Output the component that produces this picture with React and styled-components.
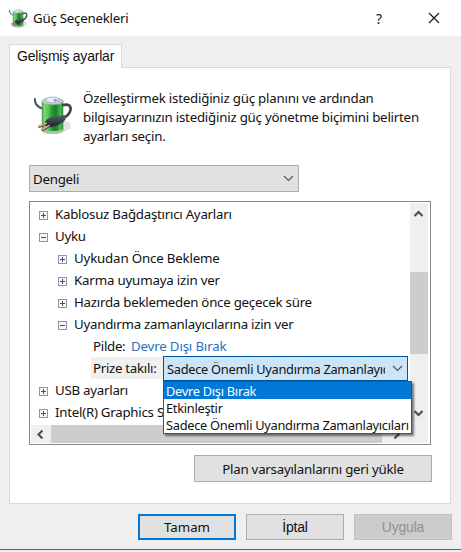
import React, { useState } from "react";
import styled, { createGlobalStyle } from "styled-components";

const treeItems = [
  { label: "Kablosuz Bağdaştırıcı Ayarları", level: 0 },
  { label: "Uyku", level: 0, open: true },
  { label: "Uykudan Önce Bekleme", level: 1, spacing: -0.18 },
  { label: "Karma uyumaya izin ver", level: 1, spacing: -0.18 },
  { label: "Hazırda beklemeden önce geçecek süre", level: 1 },
  { label: "Uyandırma zamanlayıcılarına izin ver", level: 1, open: true },
];

const moreItems = [
  { label: "USB ayarları", level: 0 },
  { label: "Intel(R) Graphics Settings", level: 0 },
];

const timerOptions = [
  "Devre Dışı Bırak",
  "Etkinleştir",
  "Sadece Önemli Uyandırma Zamanlayıcıları",
];

function PowerIcon({ size }) {
  return (
    <svg width={size} height={size} viewBox="0 0 40 40">
      <defs>
        <linearGradient id={`cell${size}`} x1="0" x2="1" y1="0" y2="0">
          <stop offset="0" stopColor="#3b9a43" />
          <stop offset="0.12" stopColor="#7fd57b" />
          <stop offset="0.3" stopColor="#5cc45e" />
          <stop offset="0.45" stopColor="#2c9d36" />
          <stop offset="0.65" stopColor="#168023" />
          <stop offset="0.88" stopColor="#4dba55" />
          <stop offset="1" stopColor="#2a7d35" />
        </linearGradient>
        <linearGradient id={`cord${size}`} x1="0" x2="0" y1="0" y2="1">
          <stop offset="0" stopColor="#59606b" />
          <stop offset="1" stopColor="#1d1f24" />
        </linearGradient>
      </defs>
      <path d="M28 38 L38 33 L37 27 L30 25Z" fill="#d5d5d5" opacity="0.7" />
      <path d="M0.500 2 Q1 11 9 13" fill="none" stroke="#4a5663" strokeWidth="2.200" />
      <path d="M8 5 V35 Q8 38.500 19 38.500 Q30 38.500 30 35 V5Z" fill={`url(#cell${size})`} />
      <path d="M8 34 Q19 38 30 34 V36 Q28 39 19 39 Q10 39 8 36Z" fill="#a8c9a6" />
      <path d="M8 6 Q8 2 19 2 Q30 2 30 6 Q28 9 19 9 Q10 9 8 6Z" fill="#b9d6bd" stroke="#7dab83" strokeWidth="0.6" />
      <ellipse cx="19" cy="4" rx="7" ry="3" fill="#e9e7f8" stroke="#9093ad" strokeWidth="0.6" />
      <path d="M20 3 L25 4 L21 6Z" fill="#8f7fc4" />
      <path d="M29 9.500 Q38 7 37.500 14 Q36.500 20 29 23" fill="none" stroke="#3c4450" strokeWidth="2.800" />
      <path d="M11 27 Q13 22 20 21.500 L31 19.500 Q34.500 21 31 26 Q25 30.500 17 32 Q11 32 11 27Z" fill={`url(#cord${size})`} />
      <path d="M13 28 L4.500 32 M16 30.500 L8 35" stroke="#5a3d24" strokeWidth="2.600" />
      <path d="M13 27.500 L4.500 31.500 M16 30 L8 34.500" stroke="#e0c19b" strokeWidth="1.400" />
    </svg>
  );
}

function Chevron({ direction = "down", bold }) {
  const points = {
    down: "1,3 5.5,7.500 10,3",
    up: "1.500,8 5.500,4 9.500,8",
    left: "7.500,1.500 3.500,5.500 7.500,9.500",
    right: "3.500,1.500 7.500,5.500 3.500,9.500",
    boldDown: "1.500,3 5.500,7 9.500,3",
  };
  const key = bold && direction === "down" ? "boldDown" : direction;
  return (
    <svg width="11" height="11" viewBox="0 0 11 11">
      <polyline
        points={points[key]}
        fill="none"
        stroke={bold ? "#505050" : "#555"}
        strokeWidth={bold ? 2.2 : 1.2}
      />
    </svg>
  );
}

function TreeItem({ item }) {
  return (
    <Row $level={item.level}>
      <Expander>
        <svg width="9" height="9" viewBox="0 0 9 9" shapeRendering="crispEdges">
          <rect x="0.5" y="0.5" width="8" height="8" fill="#f8f8fa" stroke="#9196a0" />
          <path d="M2 4.500 H7" stroke="#3f4d86" />
          {!item.open && <path d="M4.500 2 V7" stroke="#3f4d86" />}
        </svg>
      </Expander>
      <Label $spacing={item.spacing}>{item.label}</Label>
    </Row>
  );
}

export default function App() {
  const [selected, setSelected] = useState(0);

  return (
    <>
      <GlobalStyle />
      <Dialog>
        <TitleBar>
          <PowerIcon size={19} />
          <Title>Güç Seçenekleri</Title>
          <HelpButton>?</HelpButton>
          <CloseButton>
            <svg width="12" height="12" viewBox="0 0 12 12">
              <path d="M1 1 L11 11 M11 1 L1 11" stroke="#111" strokeWidth="1.100" />
            </svg>
          </CloseButton>
        </TitleBar>
        <Content>
          <Tab>Gelişmiş ayarlar</Tab>
          <Panel>
            <Intro>
              <PowerIcon size={39} />
              <IntroText>
                <IntroLine>Özelleştirmek istediğiniz güç planını ve ardından</IntroLine>
                <IntroLine>bilgisayarınızın istediğiniz güç yönetme biçimini belirten</IntroLine>
                <IntroLine>ayarları seçin.</IntroLine>
              </IntroText>
            </Intro>
            <PlanSelect>
              <span>Dengeli</span>
              <Chevron />
            </PlanSelect>
            <TreeBox>
              <Tree>
                {treeItems.map((item) => (
                  <TreeItem key={item.label} item={item} />
                ))}
                <Row $level={2}>
                  <SettingName $width={40}>Pilde:</SettingName>
                  <SettingLink>Devre Dışı Bırak</SettingLink>
                </Row>
                <Row $level={2}>
                  <SettingName $width={72} $active>Prize takılı:</SettingName>
                  <SelectAnchor>
                    <TimerSelect>
                      <TimerValue>{timerOptions[2]}</TimerValue>
                      <Chevron />
                    </TimerSelect>
                    <Menu>
                      {timerOptions.map((option, index) => (
                        <Option
                          key={option}
                          $selected={index === selected}
                          onMouseEnter={() => setSelected(index)}
                        >
                          {option}
                        </Option>
                      ))}
                    </Menu>
                  </SelectAnchor>
                </Row>
                {moreItems.map((item) => (
                  <TreeItem key={item.label} item={item} />
                ))}
              </Tree>
              <VerticalBar>
                <Chevron direction="up" bold />
                <VerticalThumb />
                <Chevron bold />
              </VerticalBar>
              <HorizontalBar>
                <Chevron direction="left" bold />
                <HorizontalThumb />
                <Chevron direction="right" bold />
              </HorizontalBar>
            </TreeBox>
            <RestoreButton>Plan varsayılanlarını geri yükle</RestoreButton>
          </Panel>
          <Footer>
            <FooterButton $primary>Tamam</FooterButton>
            <FooterButton>İptal</FooterButton>
            <FooterButton disabled>Uygula</FooterButton>
          </Footer>
        </Content>
      </Dialog>
    </>
  );
}

const GlobalStyle = createGlobalStyle`
  * {
    box-sizing: border-box;
  }
  body {
    margin: 0;
    overflow: hidden;
    background-color: #f0f0f0;
    color: #111;
    font-family: "Noto Sans", sans-serif;
    font-size: 13.3px;
    letter-spacing: -0.25px;
  }
  svg {
    display: block;
    flex-shrink: 0;
  }
  button {
    padding: 0;
    font: inherit;
    letter-spacing: inherit;
    color: inherit;
  }
`;

const Dialog = styled.div`
  width: 461px;
  height: 550px;
  background-color: #efefef;
  border-bottom: 1px solid #606060;
`;

const TitleBar = styled.header`
  display: flex;
  align-items: center;
  height: 36px;
  padding-left: 9px;
  background-color: #fff;
`;

const Title = styled.h1`
  flex: 1;
  margin: 0 0 0 5px;
  font-size: 13.3px;
  font-weight: 400;
`;

const HelpButton = styled.button`
  width: 12px;
  margin-right: 43px;
  border: 0;
  background: none;
  font-size: 14px;
`;

const CloseButton = styled.button`
  margin-right: 21px;
  border: 0;
  background: none;
`;

const Content = styled.main`
  padding: 8px 9px 0;
`;

const Tab = styled.div`
  position: relative;
  width: 113px;
  height: 24px;
  margin-bottom: -1px;
  padding: 3px 0 0 7px;
  border: 1px solid #d9d9d9;
  border-bottom: 0;
  background-color: #fff;
  font-family: "Liberation Sans", sans-serif;
  font-size: 14px;
  line-height: 17px;
  letter-spacing: -0.2px;
  white-space: nowrap;
`;

const Panel = styled.section`
  display: flex;
  flex-direction: column;
  width: 442px;
  height: 437px;
  padding: 20px 18px 0 19px;
  border: 1px solid #d9d9d9;
  background-color: #fff;
`;

const Intro = styled.div`
  display: flex;
  gap: 10px;
  height: 77px;
  padding: 8px 0 0 5px;
`;

const IntroText = styled.div`
  margin-top: -7px;
`;

const IntroLine = styled.p`
  margin: 0;
  line-height: 19px;
  letter-spacing: -0.23px;
  white-space: nowrap;
`;

const PlanSelect = styled.div`
  display: flex;
  align-items: center;
  justify-content: space-between;
  width: 270px;
  height: 27px;
  padding: 0 4px 0 3px;
  border: 1px solid #acacac;
  background-color: #e1e1e1;
`;

const TreeBox = styled.div`
  display: grid;
  grid-template-columns: 379px 18px;
  grid-template-rows: 222px 18px;
  width: 402px;
  height: 244px;
  margin-top: 9px;
  padding: 1px;
  border: 1px solid #828790;
`;

const Tree = styled.div`
  height: 222px;
`;

const Row = styled.div`
  display: flex;
  align-items: center;
  height: 22px;
  padding-left: ${(props) => 8 + props.$level * 19}px;
  white-space: nowrap;
`;

const Expander = styled.span`
  width: 16px;
  padding-top: 3px;
`;

const Label = styled.span`
  line-height: 20px;
  letter-spacing: ${(props) => props.$spacing || -0.26}px;
`;

const SettingName = styled.span`
  width: ${(props) => props.$width}px;
  margin-left: 14px;
  padding-left: 2px;
  line-height: 22px;
  letter-spacing: -0.3px;
  background-color: ${(props) => (props.$active ? "#f0f0f0" : "transparent")};
`;

const SettingLink = styled.span`
  letter-spacing: -0.17px;
  color: #2a6fc4;
`;

const SelectAnchor = styled.div`
  position: relative;
`;

const TimerSelect = styled.div`
  display: flex;
  align-items: center;
  justify-content: space-between;
  width: 245px;
  height: 25px;
  padding: 0 4px 0 3px;
  border: 1px solid #005499;
  background-color: #cce4f7;
`;

const TimerValue = styled.span`
  width: 218px;
  padding-top: 2px;
  overflow: hidden;
  font-size: 12.8px;
  letter-spacing: -0.27px;
`;

const Menu = styled.div`
  position: absolute;
  z-index: 2;
  top: 25px;
  left: 0;
  width: 249px;
  border: 1px solid #0067b4;
  background-color: #fff;
  box-shadow: 2px 2px 2px rgba(0, 0, 0, 0.5);
`;

const Option = styled.div`
  height: 17px;
  padding: 1px 0 0 2px;
  font-size: 12.8px;
  line-height: 16px;
  letter-spacing: -0.27px;
  color: ${(props) => (props.$selected ? "#fff" : "#111")};
  background-color: ${(props) => (props.$selected ? "#0078d7" : "#fff")};
`;

const VerticalBar = styled.div`
  display: flex;
  flex-direction: column;
  align-items: flex-start;
  padding: 5px 0 6px 3px;
  background-color: #efefef;
`;

const VerticalThumb = styled.div`
  width: 18px;
  height: 82px;
  margin: 53px 0 auto -3px;
  background-color: #cdcdcd;
`;

const HorizontalBar = styled.div`
  grid-column: 1 / 3;
  display: flex;
  align-items: center;
  padding-left: 4px;
  background-color: #efefef;
`;

const HorizontalThumb = styled.div`
  width: 331px;
  height: 18px;
  margin: 0 9px 0 5px;
  background-color: #cdcdcd;
`;

const RestoreButton = styled.button`
  align-self: flex-end;
  width: 238px;
  height: 27px;
  margin-top: 10px;
  border: 1px solid #adadad;
  background-color: #e1e1e1;
`;

const Footer = styled.footer`
  display: flex;
  justify-content: flex-end;
  gap: 10px;
  padding-top: 10px;
`;

const FooterButton = styled.button`
  width: 98px;
  height: 26px;
  border: ${(props) => (props.$primary ? "2px solid #0078d7" : "1px solid #adadad")};
  background-color: #e1e1e1;
  font-family: ${(props) => (props.$primary ? "inherit" : '"Liberation Sans", sans-serif')};
  font-size: ${(props) => (props.$primary ? "13.3px" : "14px")};
  letter-spacing: ${(props) => (props.$primary ? "0" : "-0.2px")};
  &:disabled {
    border-color: #bfbfbf;
    background-color: #cccccc;
    color: #929292;
  }
`;
